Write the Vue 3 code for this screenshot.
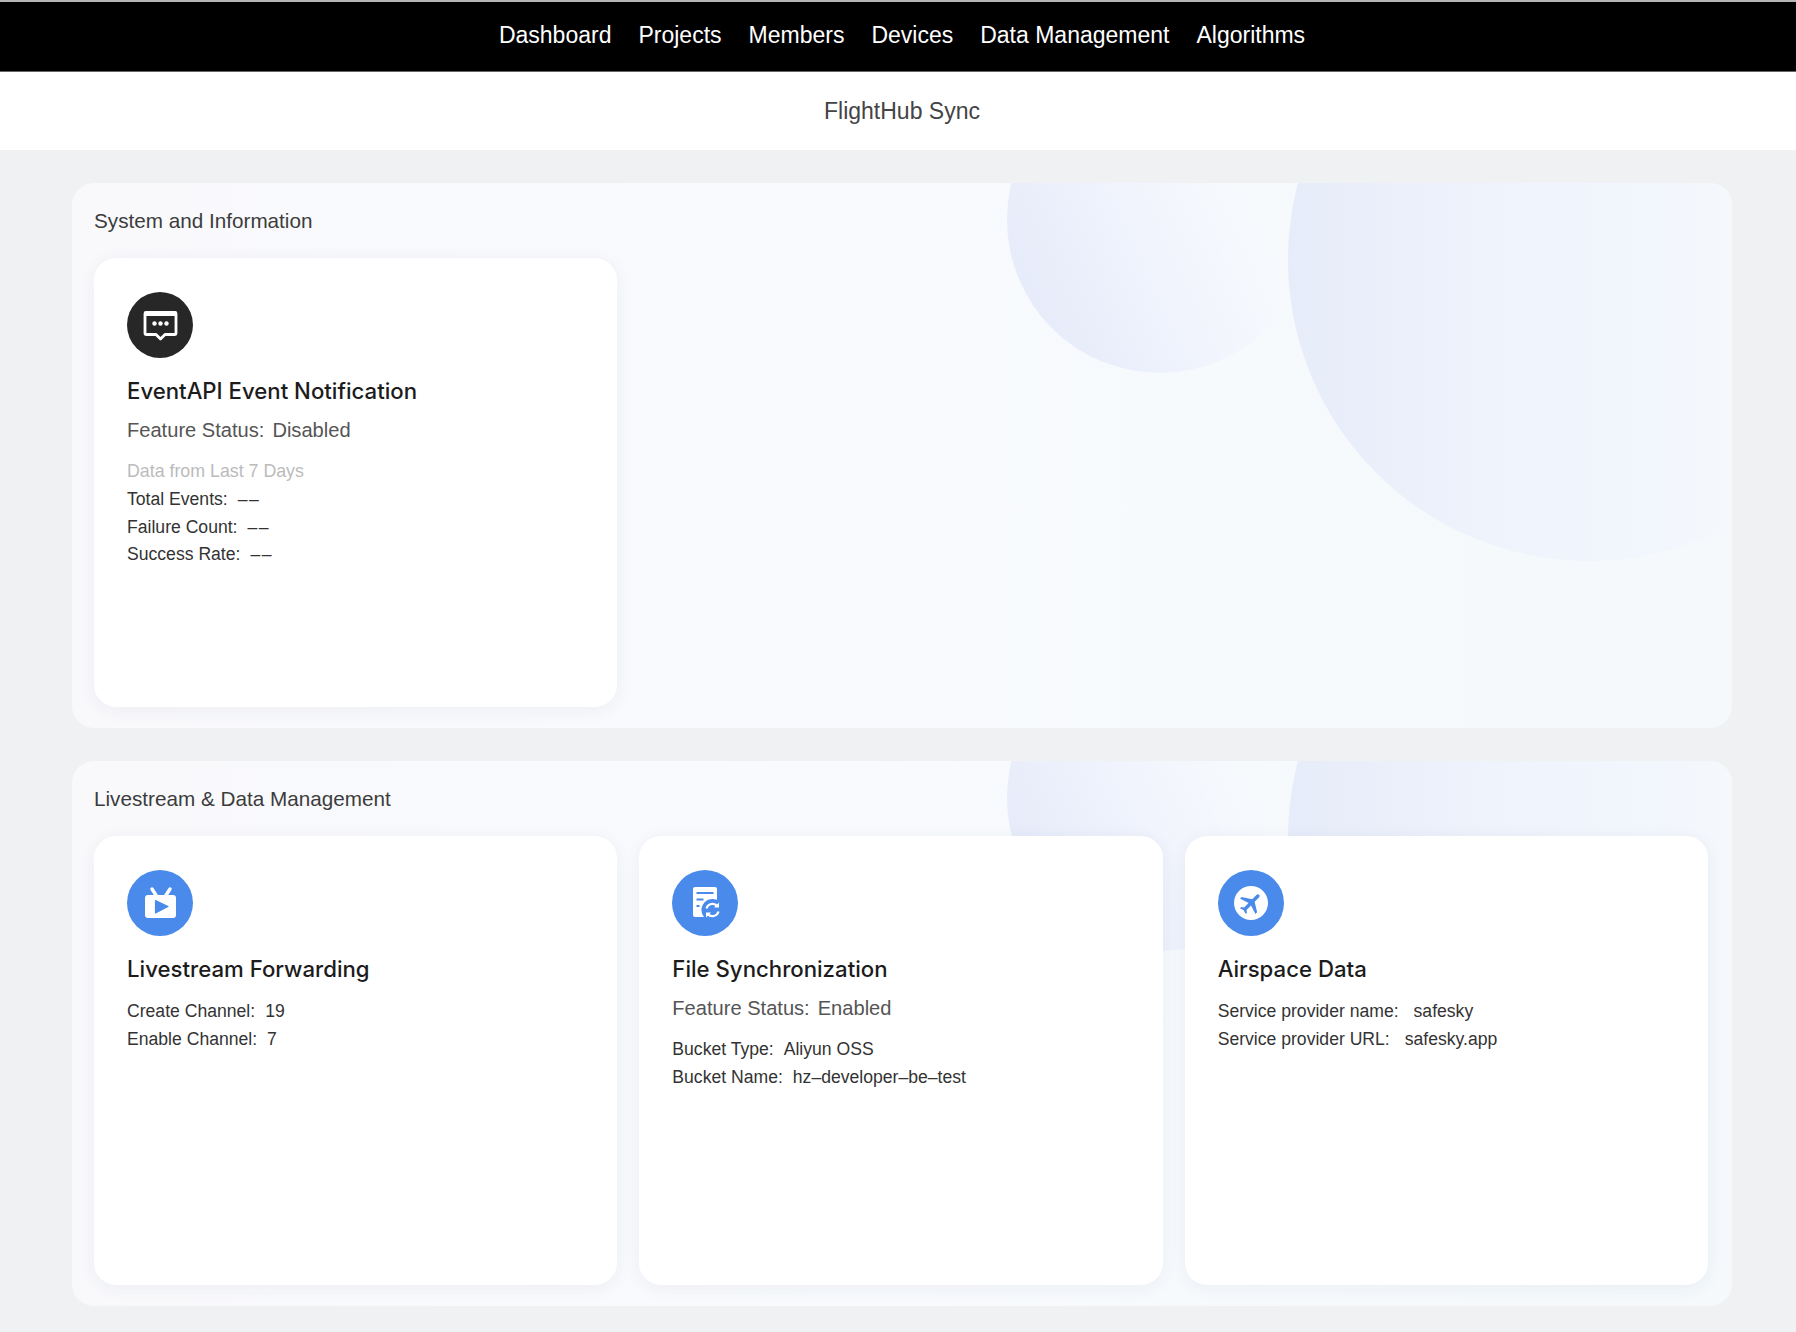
<script setup>
const navItems = ['Dashboard', 'Projects', 'Members', 'Devices', 'Data Management', 'Algorithms']

const eventRows = [
  { label: 'Total Events:', value: '––', empty: true },
  { label: 'Failure Count:', value: '––', empty: true },
  { label: 'Success Rate:', value: '––', empty: true },
]

const sections = [
  {
    title: 'System and Information',
    cards: [
      {
        icon: 'message',
        title: 'EventAPI Event Notification',
        status: 'Disabled',
        note: 'Data from Last 7 Days',
        rows: eventRows,
      },
    ],
  },
  {
    title: 'Livestream & Data Management',
    cards: [
      {
        icon: 'live',
        title: 'Livestream Forwarding',
        rows: [
          { label: 'Create Channel:', value: '19' },
          { label: 'Enable Channel:', value: '7' },
        ],
      },
      {
        icon: 'file',
        title: 'File Synchronization',
        status: 'Enabled',
        rows: [
          { label: 'Bucket Type:', value: 'Aliyun OSS' },
          { label: 'Bucket Name:', value: 'hz–developer–be–test' },
        ],
      },
      {
        icon: 'plane',
        title: 'Airspace Data',
        wide: true,
        rows: [
          { label: 'Service provider name:', value: 'safesky' },
          { label: 'Service provider URL:', value: 'safesky.app' },
        ],
      },
    ],
  },
]
</script>

<template>
  <div class="page">
    <nav class="top-nav">
      <a v-for="item in navItems" :key="item" class="nav-item">{{ item }}</a>
    </nav>
    <header class="sub-title">FlightHub Sync</header>

    <main class="content">
      <section v-for="section in sections" :key="section.title" class="section">
        <span class="blob blob--small"></span>
        <span class="blob blob--large"></span>
        <h2 class="section-title">{{ section.title }}</h2>
        <div class="card-grid">
          <article v-for="card in section.cards" :key="card.title" class="card">
            <div class="card-icon" :class="{ 'card-icon--dark': card.icon === 'message' }">
              <svg v-if="card.icon === 'message'" viewBox="0 0 66 66" width="66" height="66">
                <path d="M19 20.500h29a1 1 0 0 1 1 1v20a1 1 0 0 1-1 1h-10l-4.500 4.500-4.500-4.500h-10a1 1 0 0 1-1-1v-20a1 1 0 0 1 1-1z" fill="none" stroke="#fff" stroke-width="2.800" stroke-linejoin="round"/>
                <rect x="18" y="19" width="31" height="5" rx="1.500" fill="#fff"/>
                <circle cx="27.500" cy="31.500" r="2.200" fill="#fff"/>
                <circle cx="33.500" cy="31.500" r="2.200" fill="#fff"/>
                <circle cx="39.500" cy="31.500" r="2.200" fill="#fff"/>
              </svg>
              <svg v-else-if="card.icon === 'live'" viewBox="0 0 66 66" width="66" height="66">
                <path d="M25 19l4.500 7M43 19l-4.500 7" stroke="#fff" stroke-width="3.400" stroke-linecap="round"/>
                <rect x="18" y="25" width="31" height="23" rx="3" fill="#fff"/>
                <path d="M28.500 30.500l12.500 6-12.500 6.500z" fill="#4a8aea" stroke="#4a8aea" stroke-width="1.200" stroke-linejoin="round"/>
              </svg>
              <svg v-else-if="card.icon === 'file'" viewBox="0 0 66 66" width="66" height="66">
                <rect x="21" y="17" width="24" height="30" rx="2" fill="#fff"/>
                <path d="M24.500 23h17M24.500 29.500h7M24.500 36h3" stroke="#4a8aea" stroke-width="2.200"/>
                <circle cx="40.500" cy="40" r="11" fill="#4a8aea"/>
                <path d="M34.500 38.500a6.300 6.300 0 0 1 10.800-2.500M46.500 41.500a6.300 6.300 0 0 1-10.800 2.500" fill="none" stroke="#fff" stroke-width="2.200"/>
                <path d="M47 32.500v5h-5zM34 47.500v-5h5z" fill="#fff"/>
              </svg>
              <svg v-else viewBox="0 0 66 66" width="66" height="66">
                <circle cx="33" cy="33" r="17" fill="#fff"/>
                <path transform="translate(33 33) rotate(45) scale(1.150) translate(-11.500 -12)" d="M21 16v-2l-8-5V3.500c0-.83-.67-1.500-1.500-1.500S10 2.670 10 3.500V9l-8 5v2l8-2.500V19l-2 1.500V22l3.500-1 3.500 1v-1.500L13 19v-5.500l8 2.500z" fill="#4a8aea"/>
              </svg>
            </div>
            <h3 class="card-title">{{ card.title }}</h3>
            <p v-if="card.status" class="card-status">
              <span>Feature Status:</span><span>{{ card.status }}</span>
            </p>
            <p v-if="card.note" class="card-note">{{ card.note }}</p>
            <ul class="card-rows" :class="{ 'card-rows--tight': !card.status }">
              <li v-for="row in card.rows" :key="row.label" class="card-row" :class="{ 'card-row--wide': card.wide }">
                <span>{{ row.label }}</span><span :class="{ 'value-empty': row.empty }">{{ row.value }}</span>
              </li>
            </ul>
          </article>
        </div>
      </section>
    </main>
  </div>
</template>

<style>
html,
body {
  margin: 0;
  background: #f0f1f3;
}
</style>

<style scoped>
.page {
  min-height: 1332px;
  box-sizing: border-box;
  background: #f0f1f3;
  font-family: "Liberation Sans", Arial, sans-serif;
  color: #333;
}

.top-nav {
  display: flex;
  justify-content: center;
  align-items: center;
  gap: 27px;
  height: 66px;
  padding: 0 0 3px 8px;
  background: #000;
  border-top: 2px solid #b5b5b5;
  border-bottom: 1px solid #666;
  color: #fff;
  font-size: 23px;
}

.sub-title {
  display: flex;
  align-items: center;
  justify-content: center;
  height: 78px;
  padding-left: 8px;
  background: #fff;
  font-size: 23px;
  color: #444;
}

.content {
  display: flex;
  flex-direction: column;
  gap: 33px;
  padding: 33px 64px 26px 72px;
}

.section {
  position: relative;
  overflow: hidden;
  height: 545px;
  box-sizing: border-box;
  padding: 22px 24px 22px 22px;
  border-radius: 22px;
  background: linear-gradient(90deg, #f9f9fc 0%, #f8fafd 50%, #f5f9fc 100%);
}

.blob {
  position: absolute;
  border-radius: 50%;
}

.blob--small {
  left: 935px;
  top: -116px;
  width: 306px;
  height: 306px;
  background: linear-gradient(65deg, #e7ecfa 15%, #f1f4fd 45%, rgba(247, 250, 253, 0) 72%);
}

.blob--large {
  left: 1216px;
  top: -224px;
  width: 602px;
  height: 602px;
  background: linear-gradient(90deg, #e6ecf9 0%, #eff3fc 35%, #f2f6fd 60%, #f5f9fc 74%);
}

.section-title {
  position: relative;
  margin: 2px 0 24px;
  height: 27px;
  line-height: 27px;
  font-size: 20.700px;
  font-weight: 400;
  color: #3c3c3c;
}

.card-grid {
  position: relative;
  display: grid;
  grid-template-columns: repeat(3, 1fr);
  gap: 22px;
}

.card {
  height: 449px;
  box-sizing: border-box;
  padding: 34px 33px 33px;
  border-radius: 22px;
  background: #fff;
  box-shadow: 0 3px 18px rgba(30, 50, 90, 0.06);
}

.card-icon {
  width: 66px;
  height: 66px;
  border-radius: 50%;
  background: #4a8aea;
}

.card-icon--dark {
  background: #272727;
}

.card-icon svg {
  display: block;
}

.card-title {
  margin: 19px 0 0;
  height: 28px;
  line-height: 28px;
  font-family: Inter, "Liberation Sans", sans-serif;
  font-size: 22.200px;
  font-weight: 500;
  color: #1c1c1c;
}

.card-status {
  display: flex;
  gap: 8px;
  margin: 12px 0 0;
  height: 27px;
  line-height: 27px;
  font-size: 20.100px;
  color: #555;
}

.card-note {
  margin: 14px 0 0;
  height: 27px;
  line-height: 27px;
  font-size: 17.800px;
  color: #bbb;
}

.card-rows {
  list-style: none;
  margin: 14px 0 0;
  padding: 0;
}

.card-note + .card-rows {
  margin-top: 1px;
}

.card-rows--tight {
  margin-top: 15px;
}

.card-row {
  display: flex;
  gap: 10px;
  height: 27.500px;
  line-height: 27.500px;
  font-size: 17.600px;
  color: #333;
}

.card-row--wide {
  gap: 15px;
}

.value-empty {
  letter-spacing: 1.500px;
}
</style>
